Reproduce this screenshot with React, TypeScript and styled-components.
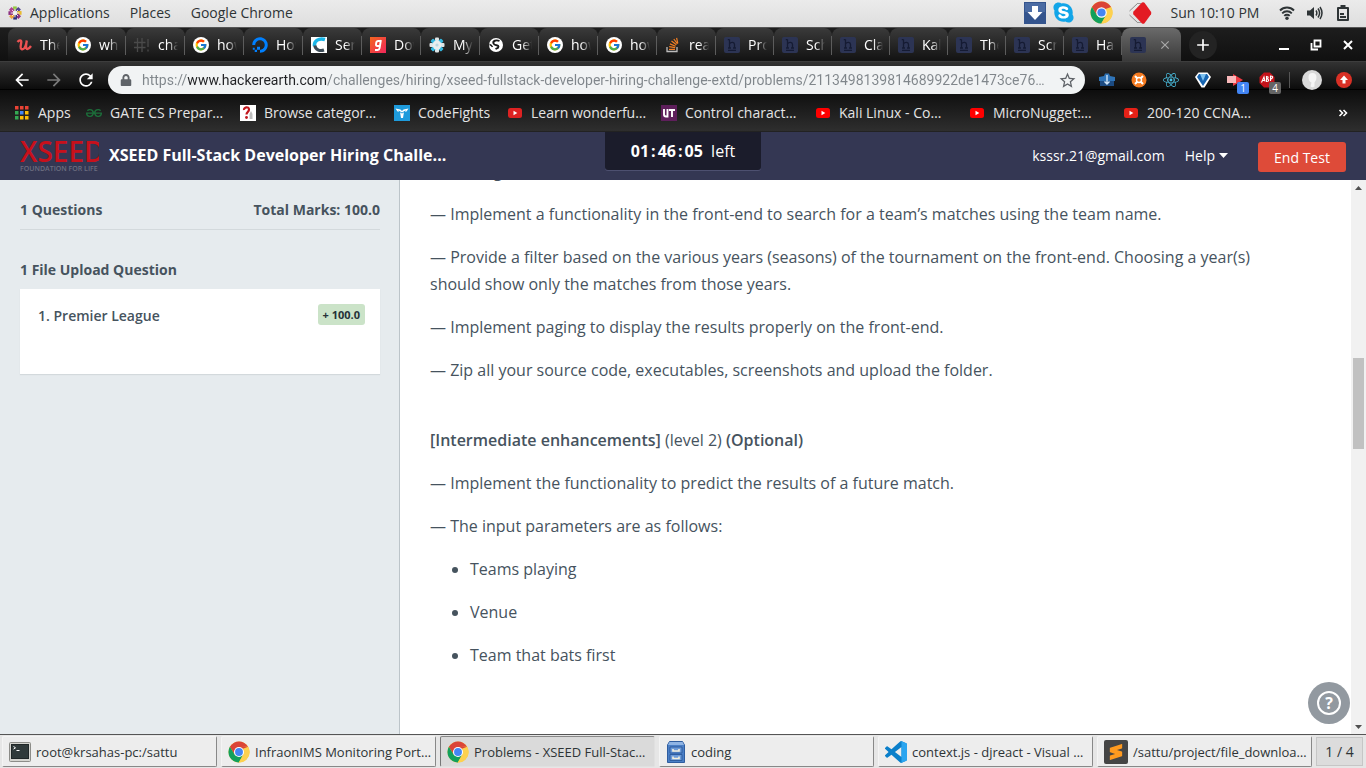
import React from 'react';
import styled, { createGlobalStyle, css } from 'styled-components';
import { FcGoogle } from 'react-icons/fc';
import { FaDigitalOcean, FaReact, FaSkype, FaLock } from 'react-icons/fa';
import { MdArrowBack, MdArrowForward, MdRefresh, MdStarBorder, MdAdd, MdClose } from 'react-icons/md';
import { SiGeeksforgeeks, SiSublimetext } from 'react-icons/si';

const GlobalStyle = createGlobalStyle`
  *, *::before, *::after { box-sizing: border-box; }
  html, body, #root { height: 100%; margin: 0; }
  body { font-family: "Open Sans", "Noto Sans", sans-serif; font-size: 14px; color: #46535e; overflow: hidden; }
  button { font: inherit; color: inherit; background: none; border: 0; padding: 0; margin: 0; }
  a { color: inherit; text-decoration: none; }
  svg { display: block; flex: none; }
`;

const Desktop = styled.div`
  display: flex;
  flex-direction: column;
  height: 100vh;
`;

/* ---------- desktop panel ---------- */

const Panel = styled.header`
  display: flex;
  align-items: center;
  justify-content: space-between;
  height: 28px;
  padding: 0 9px 2px 8px;
  color: #2e3436;
  background: linear-gradient(#ebebeb, #dedede);
  border-bottom: 1px solid #555;
`;

const PanelMenus = styled.nav`
  display: flex;
  align-items: center;
  gap: 20px;
`;

const PanelMenu = styled.button`
  display: flex;
  align-items: center;
  gap: 8px;
  white-space: nowrap;
`;

const Tray = styled.div`
  display: flex;
  align-items: center;
`;

const TrayItem = styled.button<{ $width: number }>`
  display: flex;
  justify-content: center;
  width: ${(p) => p.$width}px;
`;

const Clock = styled.time`
  width: 116px;
  text-align: center;
  white-space: nowrap;
`;

/* ---------- browser chrome ---------- */

const TabStrip = styled.div`
  display: flex;
  align-items: stretch;
  height: 34px;
  padding-left: 8px;
  background: linear-gradient(#1d1d1d, #101010);
  border-bottom: 1px solid #3d3d3d;
`;

const Tab = styled.button<{ $wide?: boolean; $active?: boolean }>`
  position: relative;
  display: flex;
  align-items: center;
  flex: 0 0 auto;
  width: ${(p) => (p.$wide ? 59 : 58)}px;
  padding: 0 7px 0 8px;
  gap: 8px;
  color: #fff;
  border-radius: 8px 8px 0 0;
  background: linear-gradient(#3a3a3a, #121212);
  &::after {
    content: '';
    position: absolute;
    right: 0;
    top: 8px;
    width: 1px;
    height: 19px;
    background: #5c5c5c;
  }
  ${(p) =>
    p.$active &&
    css`
      color: #aaa;
      gap: 12px;
      background: linear-gradient(#6a6a6a, #3a3a3a);
      &::after { display: none; }
    `}
`;

const TabTitle = styled.span`
  flex: 1;
  overflow: hidden;
  white-space: nowrap;
  text-align: left;
  mask-image: linear-gradient(to right, #000 50%, transparent);
`;

const NewTab = styled.button`
  display: flex;
  align-items: center;
  justify-content: center;
  align-self: center;
  width: 28px;
  height: 28px;
  margin-left: 8px;
  color: #fff;
  background: #232323;
  border-radius: 50%;
`;

const WindowControls = styled.div`
  display: flex;
  align-items: center;
  margin-left: auto;
  padding-right: 2px;
  color: #fff;
`;

const WindowControl = styled.button`
  display: flex;
  justify-content: center;
  width: 32px;
`;

const Bars = styled.div`
  background: linear-gradient(#323232 0, #0c0c0c 27px, #000 27px, #000 28px, #0d0d0d 28px, #2e2e2e 100%);
  border-bottom: 1px solid #222;
`;

const Toolbar = styled.div`
  display: flex;
  align-items: center;
  height: 36px;
  padding: 0 6px;
`;

const ToolButton = styled.button<{ $dim?: boolean }>`
  position: relative;
  display: flex;
  align-items: center;
  justify-content: center;
  width: 32px;
  height: 32px;
  color: ${(p) => (p.$dim ? '#7a7a7a' : '#fff')};
`;

const Omnibox = styled.form`
  display: flex;
  align-items: center;
  flex: 1;
  height: 28px;
  margin: 0 6px;
  padding: 0 8px 0 12px;
  gap: 10px;
  color: #5f6368;
  background: #f1f3f4;
  border-radius: 14px;
`;

const Address = styled.input`
  flex: 1;
  min-width: 0;
  height: 24px;
  padding: 0;
  border: 0;
  outline: 0;
  font-family: Roboto, sans-serif;
  font-size: 14px;
  text-overflow: ellipsis;
  color: transparent;
  background: linear-gradient(to right, #80868b 45px, #202124 45px, #202124 185px, #80868b 185px);
  background-clip: text;
  -webkit-background-clip: text;
`;

const Badge = styled.span<{ $color: string }>`
  position: absolute;
  right: 2px;
  bottom: 2px;
  width: 12px;
  height: 12px;
  font-size: 10px;
  line-height: 12px;
  text-align: center;
  color: #fff;
  background: ${(p) => p.$color};
  border-radius: 2px;
`;

const Divider = styled.span`
  width: 1px;
  height: 16px;
  margin: 0 6px;
  background: #555;
`;

const Bookmarks = styled.nav`
  display: flex;
  align-items: center;
  height: 33px;
  padding: 0 18px 4px 14px;
  color: #e4e4e4;
`;

const Bookmark = styled.a<{ $width: number }>`
  display: flex;
  align-items: center;
  flex: 0 0 ${(p) => p.$width}px;
  gap: 8px;
  white-space: nowrap;
`;

const Overflow = styled.button`
  display: flex;
  margin-left: auto;
  color: #fff;
`;

/* ---------- test page ---------- */

const PageHeader = styled.header`
  display: grid;
  grid-template-columns: 1fr auto 1fr;
  height: 48px;
  padding: 0 20px 2px;
  color: #fff;
  background: #343753;
`;

const Brand = styled.div`
  display: flex;
  align-items: center;
  gap: 10px;
  min-width: 0;
`;

const Title = styled.h1`
  margin: 0;
  font-size: 16px;
  font-weight: 700;
  line-height: 46px;
  white-space: nowrap;
`;

const Timer = styled.div`
  align-self: start;
  width: 156px;
  height: 38px;
  font-size: 16px;
  line-height: 38px;
  text-align: center;
  background: #1b1c2b;
  border-radius: 0 0 3px 3px;
  box-shadow: 0 1px 0 #4d5070;
`;

const Colon = styled.b`
  padding: 0 2px;
`;

const Account = styled.div`
  display: flex;
  align-items: center;
  justify-content: flex-end;
  gap: 20px;
`;

const HelpMenu = styled.button`
  display: flex;
  align-items: center;
  gap: 4px;
`;

const EndTest = styled.button`
  width: 88px;
  height: 30px;
  margin: 4px 0 0 10px;
  background: #de4b39;
  border-radius: 3px;
`;

const PageBody = styled.div`
  position: relative;
  display: flex;
  flex: 1;
  min-height: 0;
  background: #fff;
`;

const Sidebar = styled.aside`
  flex: 0 0 400px;
  padding: 20px 19px 0 20px;
  font-weight: 700;
  line-height: 20px;
  background: #e6ebee;
  border-right: 1px solid #bcc4c9;
`;

const Summary = styled.div`
  display: flex;
  justify-content: space-between;
  padding-bottom: 9px;
  border-bottom: 1px solid #d3d9dc;
`;

const GroupTitle = styled.h2`
  margin: 30px 0 9px;
  font-size: 14px;
  line-height: 20px;
`;

const Question = styled.a`
  display: flex;
  align-items: flex-start;
  justify-content: space-between;
  height: 85px;
  padding: 15px 15px 0 18px;
  font-weight: 600;
  line-height: 23px;
  background: #fff;
  box-shadow: 0 1px 1px #d3d9dc;
`;

const Marks = styled.span`
  padding: 0 5px;
  font-size: 11px;
  font-weight: 700;
  line-height: 21px;
  color: #263238;
  background: #cbe3c8;
  border-radius: 3px;
`;

const Content = styled.main`
  flex: 1;
  overflow: hidden;
  padding: 0 70px 0 30px;
  font-size: 16px;
  line-height: 27px;
`;

const Statement = styled.article`
  margin-top: -22px;
  p { margin: 0 0 16px; }
  b { font-weight: 600; }
  ul { margin: 0; padding-left: 40px; }
  li { margin-bottom: 16px; }
`;

const Section = styled.section`
  padding-bottom: 27px;
`;

const Scroll = styled.div`
  display: flex;
  flex-direction: column;
  align-items: center;
  width: 15px;
  background: #f1f1f1;
`;

const ScrollArrow = styled.button`
  display: flex;
  align-items: center;
  justify-content: center;
  height: 15px;
`;

const ScrollSpace = styled.span<{ $grow: number }>`
  flex: ${(p) => p.$grow} 0 0;
`;

const ScrollThumb = styled.span`
  flex: 91 0 0;
  width: 11px;
  background: #c1c1c1;
`;

const HelpBubble = styled.button`
  position: absolute;
  right: 16px;
  bottom: 10px;
  display: flex;
  align-items: center;
  justify-content: center;
  width: 42px;
  height: 42px;
  background: #9299a0;
  border-radius: 50%;
  span {
    width: 24px;
    height: 24px;
    font-size: 16px;
    font-weight: 700;
    line-height: 20px;
    color: #fff;
    border: 2px solid #fff;
    border-radius: 50%;
  }
`;

/* ---------- task bar ---------- */

const Taskbar = styled.footer`
  display: flex;
  gap: 4px;
  height: 34px;
  padding: 1px 3px 1px 2px;
  color: #2e3436;
  background: #e6e6e6;
  border-top: 1px solid #555;
`;

const Task = styled.button<{ $active?: boolean }>`
  display: flex;
  align-items: center;
  flex: 1 1 0;
  min-width: 0;
  gap: 5px;
  padding: 0 6px;
  font-size: 13px;
  white-space: nowrap;
  background: ${(p) => (p.$active ? '#dadada' : '#ededed')};
  border: 1px solid;
  border-color: ${(p) => (p.$active ? '#888 #e0e0e0 #e0e0e0 #777' : '#f4f4f4 #888 #888 #f4f4f4')};
  border-radius: 2px;
`;

const Workspace = styled.button`
  width: 47px;
  margin: 1px 0;
  background: #dcdcdc;
  border: 1px solid #c6c6c6;
`;

/* ---------- icons ---------- */

const Svg = ({ s = 16, h, box = '0 0 16 16', children }: { s?: number; h?: number; box?: string; children: React.ReactNode }) => (
  <svg width={s} height={h ?? s} viewBox={box} aria-hidden="true">{children}</svg>
);

const ChromeIcon = ({ s = 24 }: { s?: number }) => (
  <Svg s={s} box="0 0 48 48">
    <circle cx="24" cy="24" r="23" fill="#fbc93c" />
    <path d="M4.1 12.5A23 23 0 0 1 43.9 12.5L24 13.5L14.5 29.5z" fill="#db4437" />
    <path d="M4.1 12.5A23 23 0 0 0 23.5 47L33.5 29.5L14.5 29.5z" fill="#12a05c" />
    <path d="M43.9 12.5A23 23 0 0 1 23.5 47L33.5 29.5L34 18L24 13z" fill="#fdd14f" />
    <path d="M43.9 12.5L24 12.5L24 20z" fill="#db4437" />
    <circle cx="24" cy="24" r="11" fill="#fff" />
    <circle cx="24" cy="24" r="8.6" fill="#4486f4" />
  </Svg>
);

const ScriptU = () => (
  <Svg>
    <path d="M1.500 5C3 3 5.500 2.500 5.300 5L4.600 9.500C4.300 12.500 6.500 12.800 8 11.500 9.500 10 10.300 7 10.800 3.500M10.800 3.500C10 8 9.500 12 11.500 12 13 12 14 10.500 15 9" fill="none" stroke="#ec5252" strokeWidth="2.300" />
  </Svg>
);

const GoogleDisc = () => (
  <Svg>
    <circle cx="8" cy="8" r="8" fill="#fff" />
    <svg x="1.5" y="1.5" width="13" height="13"><FcGoogle size={13} /></svg>
  </Svg>
);

const HackerEarthIcon = () => (
  <Svg>
    <rect width="16" height="16" rx="2" fill="#2c3454" />
    <path d="M5.500 2.500V11M3.800 2.700h1.700M5.500 6.800C7 4.800 10.500 5 10.500 7.400V11M4 11h3M9 11h3M4 13.400h8" fill="none" stroke="#151b33" strokeWidth="1.300" />
  </Svg>
);

const HashBang = () => (
  <Svg>
    <path d="M3.500 1v14M8 1v14M0 5.500h11.500M0 10.500h11.500M14 2v8M14 12.500v2" fill="none" stroke="#4a4a4a" strokeWidth="1.300" />
  </Svg>
);

const CIcon = () => (
  <Svg>
    <rect width="16" height="16" fill="#fff" />
    <path d="M14 2.500C8 .5 2.800 4 3.500 9" fill="none" stroke="#19b5e8" strokeWidth="3.500" />
    <path d="M3.800 8.500C4.500 12.500 8.500 14.500 13 13" fill="none" stroke="#3c4a55" strokeWidth="3.200" />
  </Svg>
);

const GIcon = () => (
  <Svg>
    <defs>
      <linearGradient id="gfill" x1="0" y1="0" x2="1" y2="1"><stop stopColor="#f4661f" /><stop offset="1" stopColor="#f0265b" /></linearGradient>
    </defs>
    <rect width="16" height="16" fill="url(#gfill)" />
    <path d="M10.500 4H8.200Q6.500 4 6.200 6L6 7.500Q5.900 9 7.300 9H9.800M10.900 3L9.600 11.200Q9.300 13 7.600 13H5" fill="none" stroke="#fff" strokeWidth="1.900" />
  </Svg>
);

const GearFlower = () => (
  <Svg>
    {[0, 45, 90, 135, 180, 225, 270, 315].map((a) => (
      <rect key={a} x="6" y="0.500" width="4" height="6" rx="1" fill={a % 90 ? '#35b8e0' : '#dfe6e8'} transform={`rotate(${a} 8 8)`} />
    ))}
    <circle cx="8" cy="8" r="4.500" fill="#e8eef0" />
    <circle cx="8" cy="8" r="1.600" fill="#b9d8e2" />
  </Svg>
);

const GlobeDisc = () => (
  <Svg>
    <circle cx="8" cy="8" r="7" fill="#fff" />
    <path d="M11.500 4C8 2.500 4.500 4 5.500 6.500S10.500 7.500 10.500 9.500 8.500 11.500 7.500 12" fill="none" stroke="#1a1a1a" strokeWidth="1.900" />
    <path d="M1.500 7.500q2 .5 3 2.500" fill="none" stroke="#1a1a1a" strokeWidth="1.400" />
  </Svg>
);

const StackIcon = () => (
  <Svg>
    <path d="M2 10v4.500h10V10" fill="none" stroke="#bcbbbb" strokeWidth="1.300" />
    <path d="M4 12.300h6M4.200 9.700l6 .9M4.900 6.900l5.700 2.300M6.500 4l4.900 3.700M8.800 2l3.700 4.800M11.600 .8l1.200 5.500" stroke="#f48024" strokeWidth="1.200" fill="none" />
  </Svg>
);

const YoutubeIcon = ({ color = '#ff0000' }: { color?: string }) => (
  <Svg>
    <rect x="1" y="3" width="14" height="10" rx="2.500" fill={color} />
    <path d="M6.500 5.800v4.400L10.300 8z" fill="#fff" />
  </Svg>
);

const AppsGrid = () => (
  <Svg>
    {['#ea4335', '#ea4335', '#ea4335', '#34a853', '#4285f4', '#fbbc05', '#34a853', '#fbbc05', '#fbbc05'].map((c, i) => (
      <rect key={i} x={1 + (i % 3) * 5} y={1 + Math.floor(i / 3) * 5} width="3.500" height="3.500" fill={c} />
    ))}
  </Svg>
);

const BrowseIcon = () => (
  <Svg>
    <rect width="16" height="16" fill="#fff" />
    <path d="M4 5C3.500 2 9 1 9 4.500 9 7 6.500 7 6.500 9.500" fill="none" stroke="#c0161d" strokeWidth="2.200" />
    <circle cx="6.500" cy="12.500" r="1.400" fill="#c0161d" />
    <path d="M9.500 14V9l1.500-3L12.500 9v5z" fill="#bdbdbd" />
  </Svg>
);

const FightsIcon = () => (
  <Svg>
    <rect width="16" height="16" fill="#1e9bdc" />
    <path d="M1.500 3.500L6.500 4.500l1.500 1.500 1.500-1.500 5-1L12.500 6.500 10 7 9 13H7L6 7 3.500 6.500z" fill="#fff" />
    <path d="M4.500 6l3.500 2 3.500-2" fill="none" stroke="#1e9bdc" />
  </Svg>
);

const UtIcon = () => (
  <Svg>
    <rect width="16" height="16" fill="#5e1f5b" />
    <path d="M3 4v5.500Q3 11.500 5 11.500H6.500V4M8 5h6M11 5v7" fill="none" stroke="#fff" strokeWidth="1.900" />
  </Svg>
);

const Distributor = () => (
  <Svg s={14}>
    {['#93c83e', '#51448f', '#e9b92c', '#8b2f80', '#2d2f77', '#f0a03c', '#8b2f80', '#b0408e'].map((c, i) => (
      <rect key={i} x="5.800" y="0.500" width="4.200" height="5" fill={c} transform={`rotate(${i * 45} 8 8)`} />
    ))}
    <path d="M8 3v10M3 8h10M4.500 4.500l7 7M11.500 4.500l-7 7" stroke="#f3f3f3" strokeWidth="1" />
  </Svg>
);

const DownloadIcon = () => (
  <Svg s={22} box="0 0 22 22">
    <rect width="22" height="22" fill="#34548d" />
    <rect x="1" y="1" width="20" height="9" fill="#4a6ba3" />
    <path d="M8 4h6v6h4.500L11 18 3.500 10H8z" fill="#fff" />
  </Svg>
);

const SkypeIcon = () => (
  <Svg s={23} box="0 0 23 23">
    <circle cx="11.500" cy="11.500" r="7" fill="#fff" />
    <FaSkype size={23} color="#12a5e8" />
  </Svg>
);

const DiamondIcon = () => (
  <Svg s={24} box="0 0 24 24">
    <path d="M10 2L1.500 10M1.500 14L10 22" fill="none" stroke="#8a8a8a" strokeWidth="1" />
    <path d="M9 2.500h4M9 21.500h4" stroke="#999" />
    <path d="M14 1.500q1.500-.8 2.500.3l6.500 9q.6 1.200 0 2.400l-6.500 9q-1 1-2.500.3l-8.500-9q-.9-1.500 0-3z" fill="#e31b23" />
  </Svg>
);

const WifiIcon = () => (
  <Svg>
    <path d="M1 5.500a9.800 9.800 0 0 1 14 0M3.200 8.300a6.800 6.800 0 0 1 9.600 0M5.300 10.900a3.800 3.800 0 0 1 5.400 0" fill="none" stroke="#2e3436" strokeWidth="1.900" />
    <circle cx="8" cy="13.300" r="1.700" fill="#2e3436" />
  </Svg>
);

const VolumeIcon = () => (
  <Svg>
    <path d="M0 5.500h3L7 2v12l-4-3.500H0z" fill="#2e3436" />
    <path d="M9 5.500q1.700 2.500 0 5M11 3.500q3.200 4.500 0 9M13 2q4 6 0 12" fill="none" stroke="#2e3436" strokeWidth="1.500" />
  </Svg>
);

const BatteryIcon = () => (
  <Svg>
    <path d="M5.500 0h5v2H13a1 1 0 0 1 1 1v12a1 1 0 0 1-1 1H3a1 1 0 0 1-1-1V3a1 1 0 0 1 1-1h2.500zM4 4v10h8V4z" fill="#2e3436" fillRule="evenodd" />
    <path d="M5 9h4M5 12h6" stroke="#2e3436" strokeWidth="1.800" />
  </Svg>
);

const TerminalIcon = () => (
  <Svg s={22} h={20} box="0 0 22 20">
    <rect x=".5" y=".5" width="21" height="19" rx="1" fill="#d5d5d0" stroke="#8c8c88" />
    <rect x="2.500" y="2.500" width="17" height="14" fill="#303a3a" stroke="#202727" />
    <path d="M4.500 4.500l2 1.300-2 1.300M7.500 8.500h3" fill="none" stroke="#fff" />
  </Svg>
);

const CabinetIcon = () => (
  <Svg s={20} h={22} box="0 0 20 22">
    <path d="M3.500.5h13l2 3.500v17.500h-17V4z" fill="#4a7fc6" stroke="#2f5d9f" />
    <path d="M3.500 1h13l1.500 3H2z" fill="#8fb4e4" />
    <path d="M4 6h12v6H4zM4 13.500h12v6H4z" fill="#6d9bd8" stroke="#2f5d9f" />
    <path d="M7 8v2h6V8M7 15.500v2h6v-2" fill="none" stroke="#f5f0dc" strokeWidth="1.600" />
  </Svg>
);

const CodeIcon = () => (
  <Svg s={22} box="0 0 24 24">
    <path d="M23.150 2.587L18.210.210a1.494 1.494 0 0 0-1.705.290l-9.460 8.630-4.120-3.128a.999.999 0 0 0-1.276.057L.327 7.261A1 1 0 0 0 .326 8.740L3.899 12 .326 15.260a1 1 0 0 0 .001 1.479L1.650 17.940a.999.999 0 0 0 1.276.057l4.120-3.128 9.460 8.630a1.492 1.492 0 0 0 1.704.290l4.942-2.377A1.500 1.500 0 0 0 24 20.060V3.939a1.500 1.500 0 0 0-.850-1.352zm-5.146 14.861L10.826 12l7.178-5.448v10.896z" fill="#0a7fca" />
    <path d="M18 .2l5.150 2.387Q24 3 24 3.939V20.060q0 1-.850 1.400L18 23.800z" fill="#2aa5f0" />
  </Svg>
);

const SublimeIcon = () => (
  <Svg s={24} box="0 0 24 24">
    <rect width="24" height="24" rx="2" fill="#454545" />
    <svg x="4" y="4" width="16" height="16"><SiSublimetext size={16} color="#ff9a1f" /></svg>
  </Svg>
);

const BoxIcon = () => (
  <Svg>
    <path d="M0 5l5-1 1-2.500h4L11 4l5 1v4H0z" fill="#2f74b8" />
    <path d="M1 9h14v5H1z" fill="#1c4b82" />
    <path d="M8 3v9M5.500 9.500L8 12l2.500-2.500" fill="none" stroke="#cfe6fa" strokeWidth="1.400" />
  </Svg>
);

const OrangeIcon = () => (
  <Svg>
    <circle cx="8" cy="8" r="7.500" fill="#f47a20" />
    <path d="M4 4l8 8M12 4l-8 8" stroke="#fff" strokeWidth="2" />
    <circle cx="8" cy="8" r="3.200" fill="#fff" />
    <circle cx="8" cy="8" r="1.800" fill="#f47a20" />
  </Svg>
);

const DiamondDrop = () => (
  <Svg>
    <path d="M3.500.5h9L16 5 9.500 15.500h-3L0 5z" fill="#fff" />
    <path d="M4 2h8l2 3-6 9-6-9z" fill="#1664b0" />
    <path d="M5 2h6L8 9z" fill="#7cc1f0" />
  </Svg>
);

const PinkArrow = () => (
  <Svg>
    <path d="M6 2l10 6-10 6z" fill="#ee3a43" />
    <path d="M0 4h9v7H0z" fill="#f9b9bb" />
  </Svg>
);

const AbpIcon = () => (
  <Svg>
    <path d="M5 .5h6L15.500 5v6L11 15.500H5L.5 11V5z" fill="#c4121a" />
    <path d="M2.500 10.500L5 5l1 4.500M3.500 8.500h2M7.500 4.500v5q2.500 0 2-1.500T7.500 7q2-.5 1.500-2zM11.500 9V4q2.500 0 2 1.500T11.500 7" fill="none" stroke="#fff" strokeWidth="1.100" />
  </Svg>
);

const Avatar = () => (
  <Svg s={20} box="0 0 20 20">
    <circle cx="10" cy="10" r="10" fill="#d9d9d9" />
    <path d="M6.500 7q0-4 4-4t4 4.500q0 3-2 5v4q-2 1.500-4 0l1-4q-3-1-3-5.500z" fill="#f5f5f5" />
  </Svg>
);

const UpdateIcon = () => (
  <Svg>
    <circle cx="8" cy="8" r="8" fill="#d93025" />
    <path d="M8 3.500L12 8H9.500v3.500h-3V8H4z" fill="#fff" />
  </Svg>
);

const Logo = () => (
  <Svg s={79} h={34} box="0 0 79 34">
    <text x="0" y="24" fill="#c8101b" fontSize="28" fontWeight="600" fontFamily="Open Sans, sans-serif">XSEED</text>
    <text x="0" y="33" fill="#6c6e80" fontSize="7" fontWeight="600" fontFamily="Open Sans, sans-serif">FOUNDATION FOR LIFE</text>
  </Svg>
);

/* ---------- data ---------- */

const tabs = [
  { icon: <ScriptU />, title: 'The Web' },
  { icon: <GoogleDisc />, title: 'what' },
  { icon: <HashBang />, title: 'change' },
  { icon: <GoogleDisc />, title: 'how to' },
  { icon: <FaDigitalOcean size={16} color="#0080ff" />, title: 'How' },
  { icon: <CIcon />, title: 'Serve' },
  { icon: <GIcon />, title: 'Dow' },
  { icon: <GearFlower />, title: 'My' },
  { icon: <GlobeDisc />, title: 'Gett' },
  { icon: <GoogleDisc />, title: 'how to' },
  { icon: <GoogleDisc />, title: 'how to' },
  { icon: <StackIcon />, title: 'reac' },
];

const challengeTabs = ['Prob', 'Sche', 'Class', 'Kala', 'The', 'Scri', 'Hack'];

const bookmarks = [
  { icon: <AppsGrid />, label: 'Apps', width: 72 },
  { icon: <SiGeeksforgeeks size={16} color="#1c6e3a" />, label: 'GATE CS Prepar…', width: 154 },
  { icon: <BrowseIcon />, label: 'Browse categor…', width: 154 },
  { icon: <FightsIcon />, label: 'CodeFights', width: 113 },
  { icon: <YoutubeIcon color="#dd2222" />, label: 'Learn wonderfu…', width: 154 },
  { icon: <UtIcon />, label: 'Control charact…', width: 154 },
  { icon: <YoutubeIcon />, label: 'Kali Linux - Co…', width: 154 },
  { icon: <YoutubeIcon />, label: 'MicroNugget:…', width: 154 },
  { icon: <YoutubeIcon color="#e62117" />, label: '200-120 CCNA…', width: 154 },
];

const tasks = [
  { icon: <TerminalIcon />, label: 'root@krsahas-pc:/sattu' },
  { icon: <ChromeIcon s={22} />, label: 'InfraonIMS Monitoring Port…' },
  { icon: <ChromeIcon s={22} />, label: 'Problems - XSEED Full-Stac…', active: true },
  { icon: <CabinetIcon />, label: 'coding' },
  { icon: <CodeIcon />, label: 'context.js - djreact - Visual …' },
  { icon: <SublimeIcon />, label: '/sattu/project/file_downloa…' },
];

export default function App() {
  return (
    <Desktop>
      <GlobalStyle />
      <Panel>
        <PanelMenus>
          <PanelMenu><Distributor />Applications</PanelMenu>
          <PanelMenu>Places</PanelMenu>
          <PanelMenu>Google Chrome</PanelMenu>
        </PanelMenus>
        <Tray>
          <TrayItem $width={24} aria-label="Downloads"><DownloadIcon /></TrayItem>
          <TrayItem $width={32} aria-label="Skype"><SkypeIcon /></TrayItem>
          <TrayItem $width={44} aria-label="Chrome"><ChromeIcon s={23} /></TrayItem>
          <TrayItem $width={34} aria-label="Recorder"><DiamondIcon /></TrayItem>
          <Clock>Sun 10:10 PM</Clock>
          <TrayItem $width={28} aria-label="Network"><WifiIcon /></TrayItem>
          <TrayItem $width={28} aria-label="Volume"><VolumeIcon /></TrayItem>
          <TrayItem $width={28} aria-label="Battery"><BatteryIcon /></TrayItem>
        </Tray>
      </Panel>

      <TabStrip>
        {tabs.map((t, i) => (
          <Tab key={i} $wide>{t.icon}<TabTitle>{t.title}</TabTitle></Tab>
        ))}
        {challengeTabs.map((t) => (
          <Tab key={t}><HackerEarthIcon /><TabTitle>{t}</TabTitle></Tab>
        ))}
        <Tab $wide $active aria-label="Problems"><HackerEarthIcon /><MdClose size={14} /></Tab>
        <NewTab aria-label="New tab"><MdAdd size={20} /></NewTab>
        <WindowControls>
          <WindowControl aria-label="Minimize"><Svg><path d="M3 12h10" stroke="#fff" strokeWidth="2" /></Svg></WindowControl>
          <WindowControl aria-label="Restore">
            <Svg><path d="M6.500 3.500h6v6h-6zM3.500 6v6.500H10" fill="none" stroke="#fff" strokeWidth="1.800" /></Svg>
          </WindowControl>
          <WindowControl aria-label="Close"><Svg><path d="M4 4l8 8M12 4l-8 8" stroke="#fff" strokeWidth="2" /></Svg></WindowControl>
        </WindowControls>
      </TabStrip>

      <Bars>
        <Toolbar>
          <ToolButton aria-label="Back"><MdArrowBack size={20} /></ToolButton>
          <ToolButton aria-label="Forward" $dim><MdArrowForward size={20} /></ToolButton>
          <ToolButton aria-label="Reload"><MdRefresh size={20} /></ToolButton>
          <Omnibox>
            <FaLock size={12} />
            <Address
              aria-label="Address"
              defaultValue="https://www.hackerearth.com/challenges/hiring/xseed-fullstack-developer-hiring-challenge-extd/problems/2113498139814689922de1473ce76…"
            />
            <MdStarBorder size={19} />
          </Omnibox>
          <ToolButton aria-label="Downloader"><BoxIcon /></ToolButton>
          <ToolButton aria-label="Extension"><OrangeIcon /></ToolButton>
          <ToolButton aria-label="React tools"><FaReact size={16} color="#4cc3e6" /></ToolButton>
          <ToolButton aria-label="Vysor"><DiamondDrop /></ToolButton>
          <ToolButton aria-label="Recorder"><PinkArrow /><Badge $color="#4285f4">1</Badge></ToolButton>
          <ToolButton aria-label="Ad blocker"><AbpIcon /><Badge $color="#646464">4</Badge></ToolButton>
          <Divider />
          <ToolButton aria-label="Profile"><Avatar /></ToolButton>
          <ToolButton aria-label="Update"><UpdateIcon /></ToolButton>
        </Toolbar>
        <Bookmarks>
          {bookmarks.map((b) => (
            <Bookmark key={b.label} href="#" $width={b.width}>{b.icon}{b.label}</Bookmark>
          ))}
          <Overflow aria-label="More bookmarks">
            <Svg s={10} box="0 0 10 10"><path d="M1.500 2l3 3-3 3M5.500 2l3 3-3 3" fill="none" stroke="#fff" strokeWidth="1.600" /></Svg>
          </Overflow>
        </Bookmarks>
      </Bars>

      <PageHeader>
        <Brand>
          <Logo />
          <Title>XSEED Full-Stack Developer Hiring Challe...</Title>
        </Brand>
        <Timer><b>01</b><Colon>:</Colon><b>46</b><Colon>:</Colon><b>05</b>{'\u00a0 left'}</Timer>
        <Account>
          <span>ksssr.21@gmail.com</span>
          <HelpMenu>
            Help
            <Svg s={9} h={5} box="0 0 9 5"><path d="M0 0h9L4.500 5z" fill="#fff" /></Svg>
          </HelpMenu>
          <EndTest>End Test</EndTest>
        </Account>
      </PageHeader>

      <PageBody>
        <Sidebar>
          <Summary><span>1 Questions</span><span>Total Marks: 100.0</span></Summary>
          <GroupTitle>1 File Upload Question</GroupTitle>
          <Question href="#"><span>1. Premier League</span><Marks>+ 100.0</Marks></Question>
        </Sidebar>
        <Content>
          <Statement>
            <Section>
              <p>— Coding</p>
              <p>— Implement a functionality in the front-end to search for a team’s matches using the team name.</p>
              <p>— Provide a filter based on the various years (seasons) of the tournament on the front-end. Choosing a year(s) should show only the matches from those years.</p>
              <p>— Implement paging to display the results properly on the front-end.</p>
              <p>— Zip all your source code, executables, screenshots and upload the folder.</p>
            </Section>
            <p><b>[Intermediate enhancements]</b> (level 2) <b>(Optional)</b></p>
            <p>— Implement the functionality to predict the results of a future match.</p>
            <p>— The input parameters are as follows:</p>
            <ul>
              <li>Teams playing</li>
              <li>Venue</li>
              <li>Team that bats first</li>
            </ul>
          </Statement>
        </Content>
        <Scroll>
          <ScrollArrow aria-label="Scroll up"><Svg s={7} h={4} box="0 0 7 4"><path d="M0 4h7L3.500 0z" fill="#505050" /></Svg></ScrollArrow>
          <ScrollSpace $grow={163} />
          <ScrollThumb />
          <ScrollSpace $grow={269} />
          <ScrollArrow aria-label="Scroll down"><Svg s={7} h={4} box="0 0 7 4"><path d="M0 0h7L3.500 4z" fill="#505050" /></Svg></ScrollArrow>
        </Scroll>
        <HelpBubble aria-label="Support"><span>?</span></HelpBubble>
      </PageBody>

      <Taskbar>
        {tasks.map((t) => (
          <Task key={t.label} $active={t.active}>{t.icon}{t.label}</Task>
        ))}
        <Workspace>1 / 4</Workspace>
      </Taskbar>
    </Desktop>
  );
}
